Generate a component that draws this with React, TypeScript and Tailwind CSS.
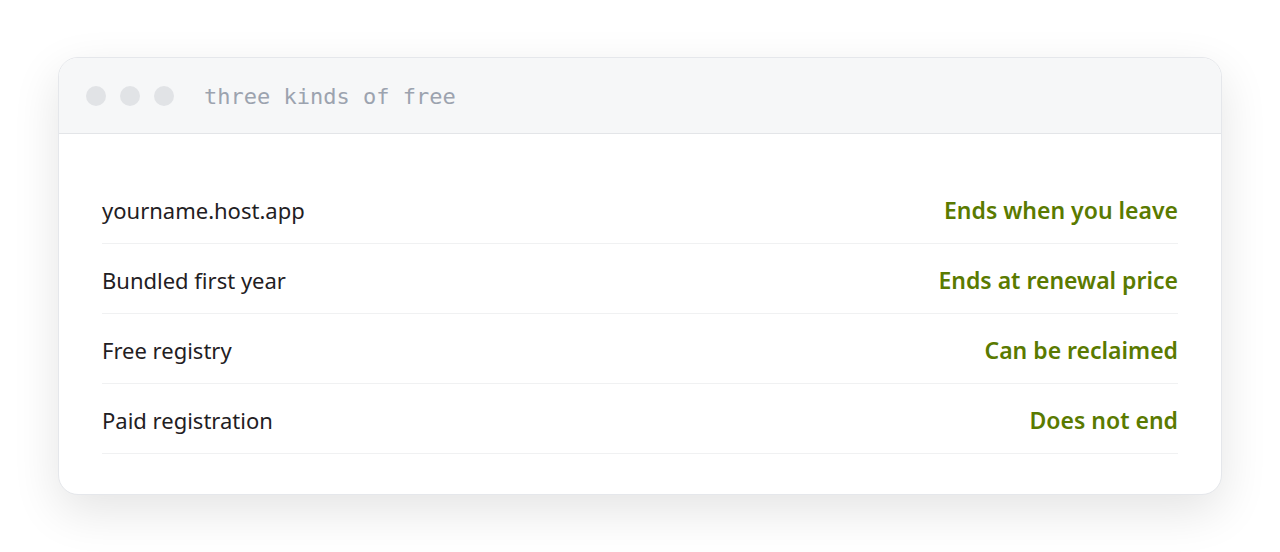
const rows = [
  { name: "yourname.host.app", status: "Ends when you leave" },
  { name: "Bundled first year", status: "Ends at renewal price" },
  { name: "Free registry", status: "Can be reclaimed" },
  { name: "Paid registration", status: "Does not end" },
];

export default function App() {
  return (
    <div className="w-[1280px] h-[552px] bg-white pt-[57px] px-[58px]" style={{ fontFamily: '"Noto Sans", "Open Sans", sans-serif' }}>
      <div className="rounded-[20px] border border-[#e5e7eb] bg-white overflow-hidden shadow-[0_16px_48px_rgba(0,0,0,0.11)]">
        <div className="h-[76px] bg-[#f6f7f8] border-b border-[#e3e5e8] flex items-center pl-[27px]">
          <div className="flex gap-[14px]">
            <span className="w-[20px] h-[20px] rounded-full bg-[#e1e3e6]" />
            <span className="w-[20px] h-[20px] rounded-full bg-[#e1e3e6]" />
            <span className="w-[20px] h-[20px] rounded-full bg-[#e1e3e6]" />
          </div>
          <span className="ml-[30px] text-[22px] text-[#9ca3af] pt-[2px]" style={{ fontFamily: '"DejaVu Sans Mono", "Liberation Mono", monospace' }}>
            three kinds of free
          </span>
        </div>
        <div className="px-[43px] pt-[40px] pb-[40px]">
          {rows.map((r) => (
            <div key={r.name} className="h-[70px] flex items-center justify-between border-b border-[#f0f1f2] pt-[3px]">
              <span className="text-[22px] text-[#1f2023]">{r.name}</span>
              <span className="text-[23px] font-semibold text-[#5a7a00]">{r.status}</span>
            </div>
          ))}
        </div>
      </div>
    </div>
  );
}
